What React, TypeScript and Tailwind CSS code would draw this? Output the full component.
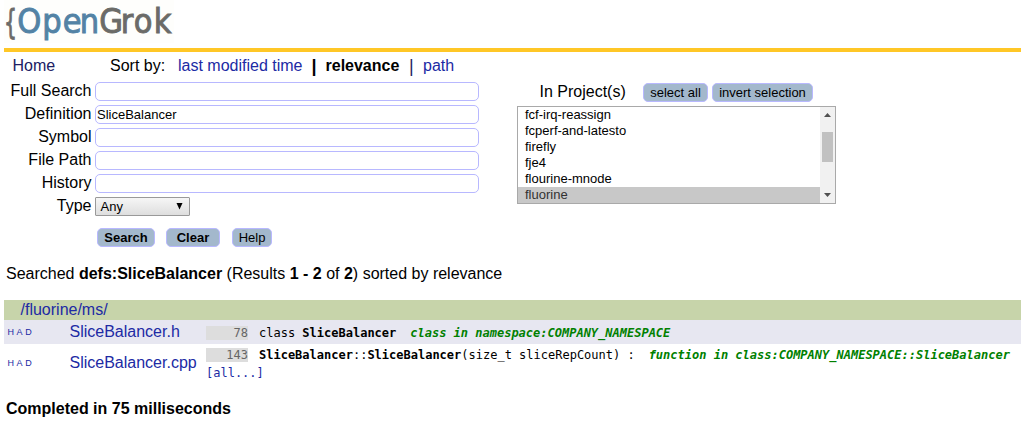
import { ReactNode } from "react";

const fields = [
  { label: "Full Search", value: "" },
  { label: "Definition", value: "SliceBalancer" },
  { label: "Symbol", value: "" },
  { label: "File Path", value: "" },
  { label: "History", value: "" },
];

const projects = ["fcf-irq-reassign", "fcperf-and-latesto", "firefly", "fje4", "flourine-mnode", "fluorine"];

function Logo() {
  return (
    <svg width="170" height="43" viewBox="0 0 170 43" className="block overflow-visible bg-[#fefefc]" fontFamily="'DejaVu Sans Condensed', 'DejaVu Sans', sans-serif" fontStretch="condensed" fontSize="34" strokeWidth="0.9">
      <text x="0" y="34" fill="#6b6b68" stroke="#6b6b68" textLength="13" lengthAdjust="spacingAndGlyphs">{"{"}</text>
      <text x="13.3 38.2 58.8 75.7" y="33.2" fill="#5383a5" stroke="#5383a5">Open</text>
      <text x="95.3 116.7 129.8 149.7" y="33.2" fill="#6b6b68" stroke="#6b6b68">Grok</text>
    </svg>
  );
}

function Button({ className, children }: { className: string; children: ReactNode }) {
  return (
    <button className={`h-[19px] shrink-0 rounded-[5px] border border-[#b8b8ff] bg-[#a3b8cc] text-center text-[13px] leading-[17px] whitespace-nowrap text-black ${className}`}>
      {children}
    </button>
  );
}

function Had() {
  return (
    <div className="flex w-[65.5px] shrink-0 gap-[2.6px] pl-[3.5px] text-[9px] leading-[10px] text-[#202aa4]">
      <a>H</a>
      <a>A</a>
      <a>D</a>
    </div>
  );
}

function LineNo({ children }: { children: ReactNode }) {
  return <span className="mr-[11px] inline-block h-[14px] w-[42px] shrink-0 bg-[#dddddd] text-right leading-[14px] text-[#666666]">{children}</span>;
}

export default function App() {
  return (
    <div className="h-[428px] w-[1021px] overflow-hidden bg-white pl-[4px] font-['Liberation_Sans',Arial,sans-serif] text-[16px] leading-[18px] text-black">
      <header className="h-[48px]">
        <Logo />
      </header>
      <div className="h-[4px] bg-[#ffc726]" />

      <nav className="flex h-[30px] items-start pt-[5px] pl-[8.5px] whitespace-pre">
        <a className="w-[97.5px] text-[#202063]">Home</a>
        <span className="w-[68px]">Sort by:</span>
        <a className="w-[133.5px] text-[#202aa4]">last modified time</a>
        <span className="w-[14px] text-[18px] font-bold">|</span>
        <b className="w-[83.5px]">relevance</b>
        <span className="w-[14px] text-[18px] text-[#202063]">|</span>
        <a className="text-[#202aa4]">path</a>
      </nav>

      <main className="flex h-[172px]">
        <form className="w-[513px] shrink-0">
          {fields.map((f) => (
            <div key={f.label} className="flex h-[23px]">
              <label className="mr-[3.5px] w-[87.5px] text-right">{f.label}</label>
              <div className="h-[19px] w-[384px] rounded-[5px] border border-[#b8b8ff] pl-px text-[13px] leading-[18px]">{f.value}</div>
            </div>
          ))}
          <div className="flex h-[31px]">
            <label className="mr-[3.5px] w-[87.5px] text-right">Type</label>
            <div className="flex h-[19px] w-[95px] items-center justify-between rounded-[1px] border border-[#999999] bg-linear-to-b from-[#f6f6f6] to-[#dedede] pr-[6px] pl-[4.5px] text-[13px] leading-[17px]">
              <span>Any</span>
              <svg width="7" height="7" viewBox="0 0 7 7">
                <path d="M0.5 0H6.5L3.5 6.5Z" fill="#000" />
              </svg>
            </div>
          </div>
          <div className="flex pl-[93px]">
            <Button className="mr-[11px] w-[58px] font-bold">Search</Button>
            <Button className="mr-[12px] w-[54px] font-bold">Clear</Button>
            <Button className="w-[40px]">Help</Button>
          </div>
        </form>

        <section className="w-[319px]">
          <div className="flex h-[24px]">
            <span className="w-[126px] pt-px pl-[22.5px]">In Project(s)</span>
            <Button className="mt-px mr-[4px] w-[65px]">select all</Button>
            <Button className="mt-px w-[101px]">invert selection</Button>
          </div>
          <div className="flex h-[98px] border border-[#a9a9a9] text-[13px] leading-[16px]">
            <ul className="flex-1">
              {projects.map((p) => (
                <li key={p} className={p === "fluorine" ? "h-[16px] bg-[#c8c8c8] pl-[7px] text-[#323232]" : "h-[16px] pl-[7px]"}>
                  {p}
                </li>
              ))}
            </ul>
            <div className="flex w-[15px] flex-col items-center bg-[#f1f1f1]">
              <svg width="15" height="25" viewBox="0 0 15 25">
                <path d="M4 10L7.5 6L11 10Z" fill="#505050" />
              </svg>
              <div className="h-[30px] w-[11px] bg-[#c1c1c1]" />
              <svg width="15" height="41" viewBox="0 0 15 41">
                <path d="M4 31L7.5 35L11 31Z" fill="#505050" />
              </svg>
            </div>
          </div>
        </section>
      </main>

      <p className="h-[46px] pt-[11px] pl-[2px]">
        Searched <b>defs:SliceBalancer</b> (Results <b>1 - 2</b> of <b>2</b>) sorted by relevance
      </p>

      <section>
        <div className="h-[20px] bg-[#c7d4aa] pl-[16.5px] leading-[19px] text-[#202aa4]">/fluorine/ms/</div>
        <div className="flex h-[24px] items-center bg-[#e7e7f1]">
          <Had />
          <a className="w-[136.5px] shrink-0 pb-px text-[#202aa4]">SliceBalancer.h</a>
          <code className="flex pt-[2px] font-['DejaVu_Sans_Mono',monospace] text-[12px] leading-[14px] whitespace-pre">
            <LineNo>78</LineNo>
            <span>
              class <b>SliceBalancer</b>{"  "}
              <b className="-ml-[0.5px] text-[#008000] italic">class in namespace:COMPANY_NAMESPACE</b>
            </span>
          </code>
        </div>
        <div className="flex h-[38px] items-center">
          <Had />
          <a className="w-[136.5px] shrink-0 pb-px text-[#202aa4]">SliceBalancer.cpp</a>
          <code className="flex flex-col pt-[2px] font-['DejaVu_Sans_Mono',monospace] text-[12px] leading-[14px] whitespace-pre">
            <span className="mb-[4px] flex">
              <LineNo>143</LineNo>
              <span>
                <b>SliceBalancer</b>::<b>SliceBalancer</b>(size_t sliceRepCount) :{"  "}
                <b className="-ml-[0.5px] text-[#008000] italic">function in class:COMPANY_NAMESPACE::SliceBalancer</b>
              </span>
            </span>
            <a className="text-[#202aa4]">[all...]</a>
          </code>
        </div>
      </section>

      <p className="pt-[18px] pl-[2px] font-bold">Completed in 75 milliseconds</p>
    </div>
  );
}
